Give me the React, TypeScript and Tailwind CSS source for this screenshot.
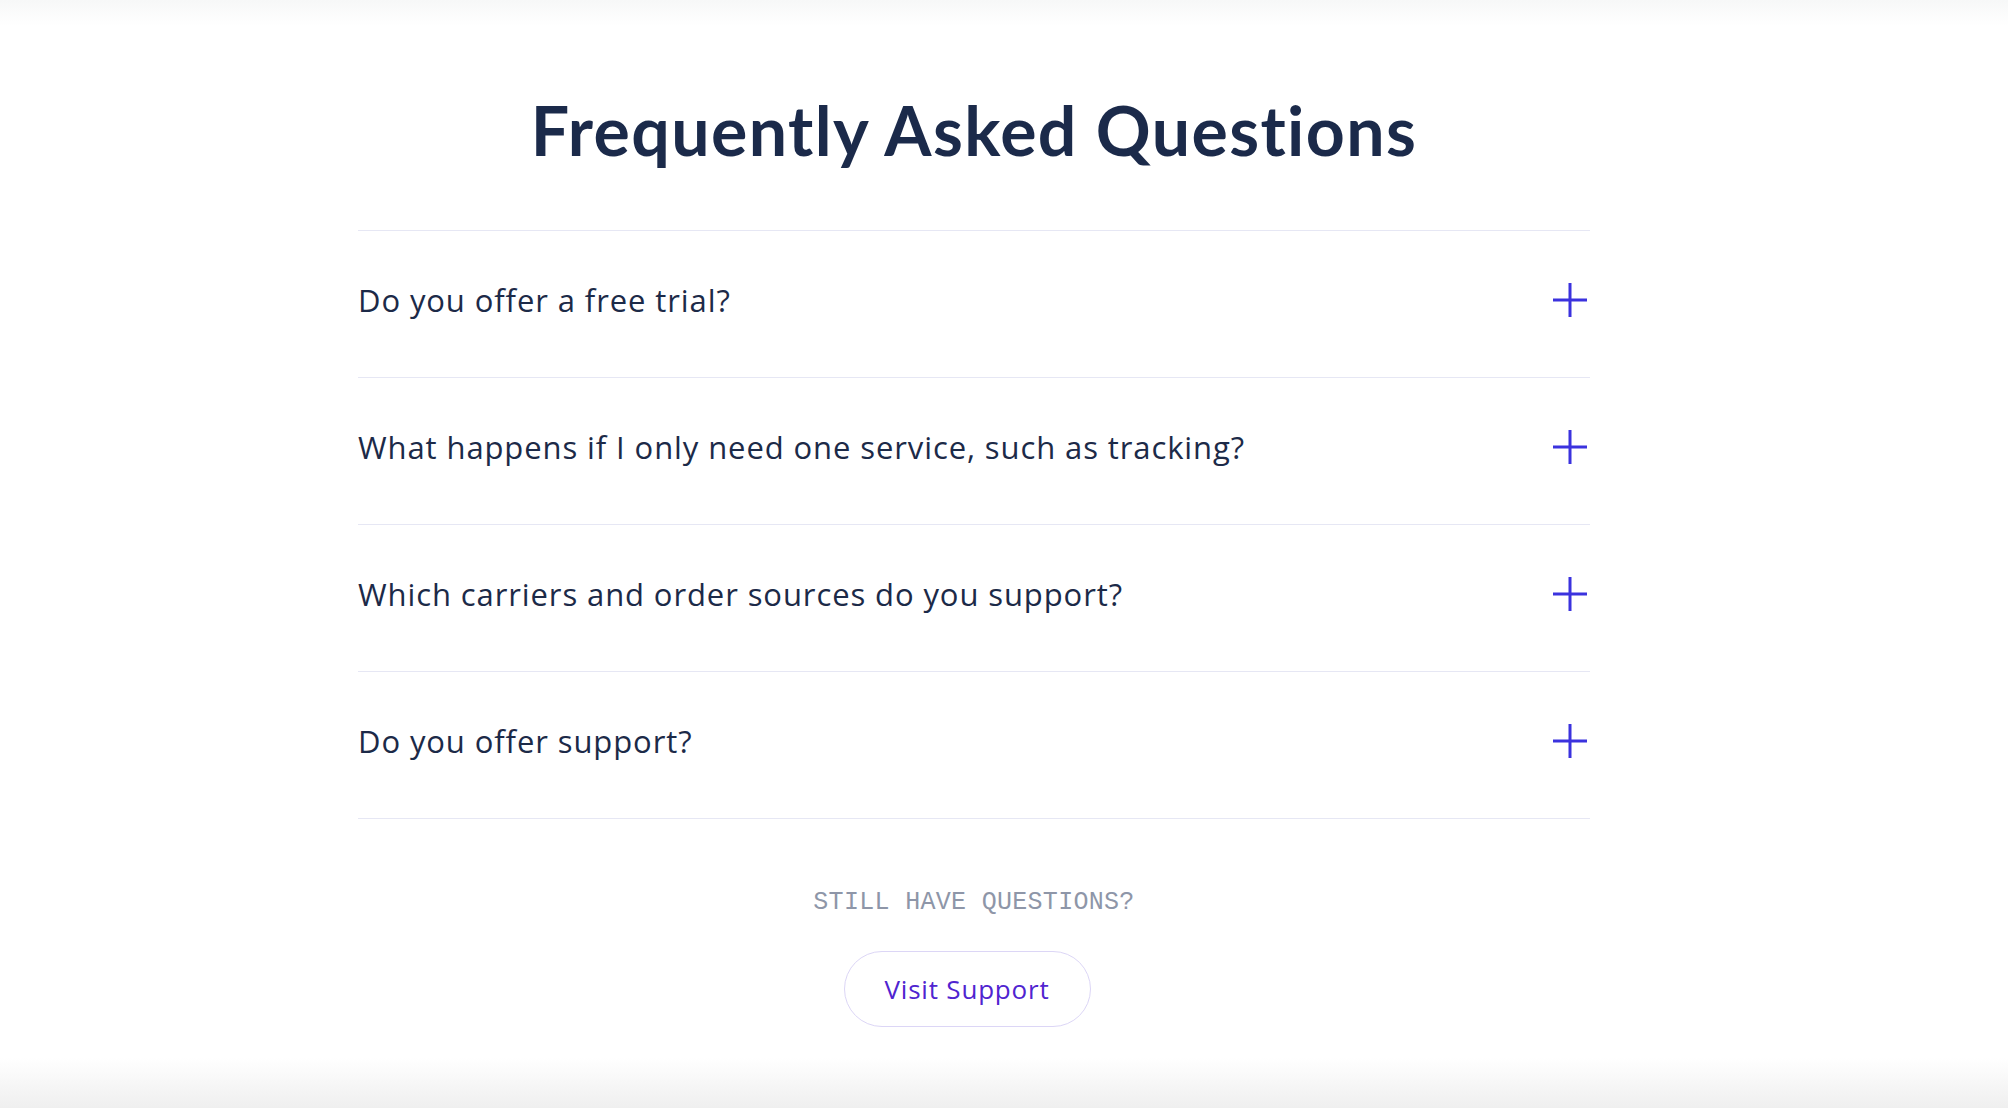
import { useState } from "react";

const questions = [
  "Do you offer a free trial?",
  "What happens if I only need one service, such as tracking?",
  "Which carriers and order sources do you support?",
  "Do you offer support?",
];

function PlusIcon() {
  return (
    <svg width="36" height="36" viewBox="0 0 36 36" fill="none">
      <path d="M18 1v34M1 18h34" stroke="#3b32de" strokeWidth="3" />
    </svg>
  );
}

export default function App() {
  const [open, setOpen] = useState<number | null>(null);

  return (
    <div className="h-[1108px] flex flex-col bg-white overflow-hidden font-['Open_Sans',sans-serif]">
      <div className="h-[26px] bg-gradient-to-b from-[#f7f8f8] to-white" />
      <main className="flex-1 flex justify-center pr-[60px]">
        <div className="w-[1232px] flex flex-col">
          <h1 className="mt-[70px] text-center font-['Lato',sans-serif] text-[68px] leading-none font-bold tracking-[1.4px] text-[#1b2a4a]">
            Frequently Asked Questions
          </h1>
          <div className="mt-[66px] border-t border-[#e6e7f4]">
            {questions.map((q, i) => (
              <button
                key={q}
                onClick={() => setOpen(open === i ? null : i)}
                className="w-full h-[147px] flex items-center justify-between border-b border-[#e6e7f4] pb-2 pr-[2px] text-left"
              >
                <span className="text-[31px] tracking-[0.9px] text-[#1c2a48]">{q}</span>
                <PlusIcon />
              </button>
            ))}
          </div>
          <div className="flex flex-col items-center">
            <p className="mt-[71px] font-['Liberation_Mono',monospace] text-[25px] leading-none tracking-[0.3px] text-[#8e96a8]">
              STILL HAVE QUESTIONS?
            </p>
            <a
              href="#"
              className="mt-[36px] mr-[14px] w-[247px] h-[76px] flex items-center justify-center rounded-full border border-[#dcd6f6] text-[26px] tracking-[0.8px] text-[#5024d0]"
            >
              Visit Support
            </a>
          </div>
        </div>
      </main>
      <div className="h-[50px] bg-gradient-to-b from-white to-[#efefef]" />
    </div>
  );
}
